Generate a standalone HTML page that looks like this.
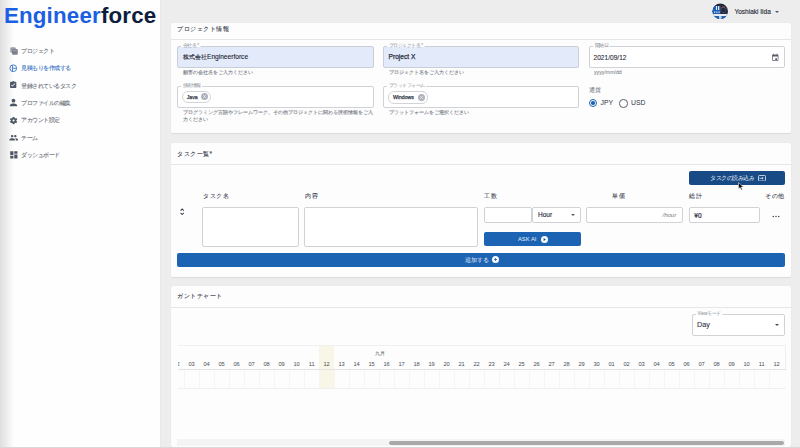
<!DOCTYPE html>
<html><head><meta charset="utf-8">
<style>
*{box-sizing:border-box;margin:0;padding:0}
html,body{width:800px;height:448px;overflow:hidden}
body{background:#ededed;font-family:"Liberation Sans",sans-serif;color:#2d3445;position:relative}
.abs{position:absolute}
#side{position:absolute;left:0;top:0;width:161px;height:448px;background:#fefefe;border-right:1px solid #e8e8e8}
#side .shadow{position:absolute;left:0;top:0;width:14px;height:448px;background:linear-gradient(to right,#dedede,rgba(254,254,254,0))}
.logo{position:absolute;left:3.9px;top:2.8px;font-size:22.3px;font-weight:bold;letter-spacing:0.2px;white-space:nowrap}
.logo .e{color:#1b5fe3}.logo .f{color:#0d1d3b}
.mi{position:absolute;left:20.8px;font-size:11.3px;color:#6e737c;-webkit-text-stroke:0.2px #6e737c;white-space:nowrap;line-height:14px;transform:scale(.5);transform-origin:0 0}
.mi.act{color:#3a78c4;-webkit-text-stroke-color:#3a78c4}
.ic{position:absolute;left:10px}
.card{position:absolute;left:171px;width:620px;background:#fdfdfd;border-radius:2px;box-shadow:0 0.5px 1px rgba(0,0,0,0.08)}
.ch{position:absolute;left:5.5px;font-size:12.9px;color:#3c4250;-webkit-text-stroke:0.2px #3c4250;white-space:nowrap;transform:scale(.5);transform-origin:0 0}
.dv{position:absolute;left:0;right:0;height:1px;background:#e6e6e6}
.fld{position:absolute;border:1px solid #d0d2d6;border-radius:2px;background:#fff}
.fld.fill{background:#e3ebfa;border-color:#c9cfd9}
.lbl{position:absolute;font-size:9.2px;color:#858a93;background:linear-gradient(#fdfdfd 0,#fdfdfd 7.2px,transparent 7.2px);padding:0 3px;white-space:nowrap;line-height:10px;transform:scale(.5);transform-origin:0 0}
.val{position:absolute;font-size:6.6px;color:#1f2533;-webkit-text-stroke:0.08px #1f2533;white-space:nowrap}
.help{position:absolute;font-size:10px;color:#7c818a;-webkit-text-stroke:0.24px #7c818a;white-space:nowrap;line-height:15px;transform:scale(.5);transform-origin:0 0}
.chip{position:absolute;height:12.5px;border:1px solid #d2d4d8;border-radius:6px;background:#fff}
.chip span{position:absolute;left:4px;top:2.3px;font-size:5.2px;color:#353c4b;-webkit-text-stroke:0.25px #353c4b}
.x{position:absolute;width:7px;height:7px}
.tl{position:absolute;font-size:12.6px;color:#3f4553;-webkit-text-stroke:0.16px #3f4553;white-space:nowrap;transform:scale(.5);transform-origin:0 0}
.gd{position:absolute;top:15px;width:15px;text-align:center;font-size:5.7px;color:#484d56;line-height:6px}
.gl{position:absolute;top:24.3px;width:1px;height:18px;background:#f5f5f5}
.btn{position:absolute;background:#1c64b3;border-radius:2px;color:#fff;white-space:nowrap}
</style></head><body>

<div id="side">
  <div class="shadow"></div>
  <div class="logo"><span class="e">Engineer</span><span class="f">force</span></div>

  <svg class="ic" style="top:46.8px;left:9.5px" width="8" height="8" viewBox="0 0 16 16"><rect x="0.5" y="0.5" width="11" height="11" rx="2.5" fill="#9a9fa8"/><rect x="4" y="4" width="11.5" height="11.5" rx="2.5" fill="#7d828c"/><rect x="5.5" y="6" width="8" height="1.5" fill="#a5aab2"/></svg>
  <div class="mi" style="top:46.6px">プロジェクト</div>
  <svg class="ic" style="top:64px;left:9.3px" width="8.5" height="8.5" viewBox="0 0 24 24"><circle cx="12" cy="12" r="9.5" fill="none" stroke="#3a78c4" stroke-width="2.6"/><path d="M10 3v18M10 12h11" stroke="#3a78c4" stroke-width="2.6" fill="none"/></svg>
  <div class="mi act" style="top:64.1px">見積もりを作成する</div>
  <svg class="ic" style="top:79.5px;left:9.3px" width="8.4" height="9.6" viewBox="0 0 24 24"><path fill="#4f5766" d="M19 3h-4.18C14.4 1.84 13.3 1 12 1c-1.3 0-2.4.84-2.82 2H5c-1.1 0-2 .9-2 2v14c0 1.1.9 2 2 2h14c1.1 0 2-.9 2-2V5c0-1.1-.9-2-2-2zm-9 14l-4-4 1.41-1.41L10 14.17l6.59-6.59L18 9l-8 8z"/></svg>
  <div class="mi" style="top:81.6px">登録されているタスク</div>
  <svg class="ic" style="top:97.45px;left:8.15px" width="11" height="11" viewBox="0 0 24 24"><path fill="#4f5766" d="M12 12c2.21 0 4-1.79 4-4s-1.79-4-4-4-4 1.79-4 4 1.79 4 4 4zm0 2c-2.67 0-8 1.34-8 4v2h16v-2c0-2.66-5.33-4-8-4z"/></svg>
  <div class="mi" style="top:98.6px">プロファイルの編集</div>
  <svg class="ic" style="top:115.75px;left:9.05px" width="9.2" height="9.2" viewBox="0 0 24 24"><path fill="#4f5766" d="M19.14 12.94c.04-.3.06-.61.06-.94 0-.32-.02-.64-.07-.94l2.03-1.58c.18-.14.23-.41.12-.61l-1.920-3.32c-.12-.22-.37-.29-.59-.22l-2.39.96c-.5-.38-1.03-.7-1.62-.94l-.36-2.54c-.04-.24-.24-.41-.48-.41h-3.84c-.24 0-.43.17-.47.41l-.36 2.54c-.59.24-1.13.57-1.62.94l-2.39-.96c-.22-.08-.47 0-.59.22L2.74 8.87c-.12.21-.08.47.12.61l2.03 1.58c-.05.3-.09.63-.09.94s.02.64.07.94l-2.03 1.58c-.18.14-.23.41-.12.61l1.92 3.32c.12.22.37.29.59.22l2.39-.96c.5.38 1.030.7 1.62.94l.36 2.54c.05.24.24.41.48.41h3.84c.24 0 .44-.17.47-.41l.36-2.54c.59-.24 1.13-.56 1.62-.94l2.39.96c.22.08.47 0 .59-.22l1.92-3.32c.12-.22.07-.47-.12-.61l-2.01-1.58zM12 14.6c-1.43 0-2.6-1.17-2.6-2.6s1.17-2.6 2.6-2.6 2.6 1.17 2.6 2.6-1.17 2.6-2.6 2.6z"/></svg>
  <div class="mi" style="top:116.1px">アカウント設定</div>
  <svg class="ic" style="top:132.5px;left:8.9px" width="9.5" height="9.5" viewBox="0 0 24 24"><path fill="#4f5766" d="M16 11c1.66 0 2.99-1.34 2.99-3S17.66 5 16 5c-1.660 0-3 1.34-3 3s1.34 3 3 3zm-8 0c1.66 0 2.99-1.34 2.99-3S9.66 5 8 5C6.34 5 5 6.34 5 8s1.34 3 3 3zm0 2c-2.33 0-7 1.17-7 3.5V19h14v-2.5c0-2.33-4.67-3.5-7-3.5zm8 0c-.29 0-.62.02-.97.05 1.16.84 1.97 1.97 1.97 3.45V19h6v-2.5c0-2.33-4.67-3.5-7-3.5z"/></svg>
  <div class="mi" style="top:133.6px">チーム</div>
  <svg class="ic" style="top:149.95px;left:8.8px" width="9.7" height="9.7" viewBox="0 0 24 24"><path fill="#4f5766" d="M3 13h8V3H3v10zm0 8h8v-6H3v6zm10 0h8V11h-8v10zm0-18v6h8V3h-8z"/></svg>
  <div class="mi" style="top:150.6px">ダッシュボード</div>
</div>


<!-- header user -->
<svg class="abs" style="left:711.5px;top:3.2px" width="16.5" height="16.5" viewBox="0 0 33 33">
  <defs><clipPath id="av"><circle cx="16.5" cy="16.5" r="15.5"/></clipPath></defs>
  <circle cx="16.5" cy="16.5" r="16.3" fill="#f6f7f9"/>
  <g clip-path="url(#av)">
    <rect x="0" y="0" width="33" height="33" fill="#222836"/>
    <rect x="0" y="6" width="17" height="16" fill="#1e5eb4"/>
    <rect x="8" y="6" width="2" height="8" fill="#e6eef8"/>
    <rect x="12" y="6" width="2.5" height="8" fill="#d8e4f4"/>
    <rect x="4" y="17" width="2.5" height="2.5" fill="#e6eef8"/>
    <rect x="8.5" y="17" width="2.5" height="2.5" fill="#e6eef8"/>
    <rect x="13" y="17" width="2.5" height="2.5" fill="#e6eef8"/>
    <circle cx="23" cy="14" r="5.5" fill="none" stroke="#4a4f66" stroke-width="1.5"/>
    <path d="M19 9.5a6 6 0 0 1 7 -1" stroke="#d9582e" stroke-width="1.6" fill="none"/>
    <circle cx="24" cy="18.5" r="1.1" fill="#8a3fbf"/>
    <circle cx="26" cy="11" r="0.9" fill="#8a3fbf"/>
    <rect x="0" y="22" width="33" height="4" fill="#e9edf3"/>
    <rect x="0" y="26" width="33" height="7" fill="#1f62c2"/>
    <rect x="14" y="26" width="5" height="7" fill="#c9cfd8"/>
  </g>
</svg>
<div class="abs" style="left:734.5px;top:8px;font-size:6.5px;color:#2a303c;-webkit-text-stroke:0.15px #2a303c;white-space:nowrap">Yoshiaki Iida</div>
<div class="abs" style="left:775.3px;top:10.5px;width:0;height:0;border-left:2.2px solid transparent;border-right:2.2px solid transparent;border-top:2.4px solid #555b66"></div>

<!-- card 1 -->
<div class="card" style="top:23px;height:110px">
  <div class="ch" style="top:1.5px">プロジェクト情報</div>
  <div class="dv" style="top:16px"></div>

  <div class="fld fill" style="left:6px;top:23px;width:197px;height:22px"></div>
  <div class="lbl" style="left:10px;top:20px">会社名 *</div>
  <div class="val" style="left:11.8px;top:29.9px;font-size:12px;transform:scale(.5);transform-origin:0 0;-webkit-text-stroke:0.22px #1f2533">株式会社<span style="font-size:13.2px">Engineerforce</span></div>
  <div class="help" style="left:11.5px;top:45.4px">顧客の会社名をご入力ください</div>

  <div class="fld fill" style="left:212px;top:23px;width:196px;height:22px"></div>
  <div class="lbl" style="left:216px;top:20px">プロジェクト名 *</div>
  <div class="val" style="left:217.6px;top:30.4px;color:#2a3040;font-size:6.6px;-webkit-text-stroke:0.25px #2a3040">Project X</div>
  <div class="help" style="left:217.5px;top:45.4px">プロジェクト名をご入力ください</div>

  <div class="fld" style="left:418px;top:23px;width:196px;height:22px"></div>
  <div class="lbl" style="left:422px;top:20px">開始日</div>
  <div class="val" style="left:422.5px;top:30.7px">2021/09/12</div>
  <div class="help" style="left:423px;top:45.4px;font-size:10.4px;-webkit-text-stroke:0.1px #7c818a">yyyy/mm/dd</div>
  <svg class="abs" style="left:599.5px;top:29.5px" width="8.5" height="8.5" viewBox="0 0 24 24"><path fill="#5a5f69" d="M19 4h-1V2h-2v2H8V2H6v2H5c-1.11 0-1.99.9-1.99 2L3 20a2 2 0 0 0 2 2h14c1.1 0 2-.9 2-2V6c0-1.1-.9-2-2-2zm0 16H5V10h14v10zm-7-5h5v5h-5z"/></svg>

  <div class="fld" style="left:6px;top:63px;width:197px;height:22px"></div>
  <div class="lbl" style="left:10px;top:60px">技術情報</div>
  <div class="chip" style="left:10.75px;top:67.75px;width:29.5px"><span>Java</span></div>
  <svg class="x" style="left:30.25px;top:70.25px" viewBox="0 0 14 14"><circle cx="7" cy="7" r="7" fill="#aeb2ba"/><path d="M4.3 4.3l5.4 5.4M9.7 4.3l-5.4 5.4" stroke="#eef0f3" stroke-width="1.5"/></svg>
  <div class="help" style="left:11.5px;top:84.9px">プログラミング言語やフレームワーク、その他プロジェクトに関わる技術情報をご入</div>
  <div class="help" style="left:11.5px;top:92.4px">力ください</div>

  <div class="fld" style="left:212px;top:63px;width:196px;height:22px"></div>
  <div class="lbl" style="left:216px;top:60px">プラットフォーム</div>
  <div class="chip" style="left:216.9px;top:68.1px;width:39.7px"><span>Windows</span></div>
  <svg class="x" style="left:246.9px;top:70.6px" viewBox="0 0 14 14"><circle cx="7" cy="7" r="7" fill="#aeb2ba"/><path d="M4.3 4.3l5.4 5.4M9.7 4.3l-5.4 5.4" stroke="#eef0f3" stroke-width="1.5"/></svg>
  <div class="help" style="left:217.5px;top:84.9px">プラットフォームをご選択ください</div>

  <div class="abs" style="left:418px;top:63.2px;font-size:12px;color:#6d727c;transform:scale(.5);transform-origin:0 0">通貨</div>
  <div class="abs" style="left:418px;top:76px;width:8px;height:8px;border-radius:50%;border:1px solid #1c64b3"></div>
  <div class="abs" style="left:420.2px;top:78.2px;width:3.6px;height:3.6px;border-radius:50%;background:#1c64b3"></div>
  <div class="abs" style="left:429.5px;top:76px;font-size:6.8px;color:#2d3445">JPY</div>
  <div class="abs" style="left:448px;top:76px;width:8.5px;height:8.5px;border-radius:50%;border:1px solid #5b606b"></div>
  <div class="abs" style="left:460.1px;top:76px;font-size:6.8px;color:#2d3445">USD</div>
</div>

<!-- card 2 -->
<div class="card" style="top:143px;height:134px">
  <div class="ch" style="top:6.5px">タスク一覧*</div>
  <div class="dv" style="top:21px"></div>

  <div class="btn" style="left:518px;top:28px;width:96px;height:14px;background:#184b86"></div>
  <div class="abs" style="left:538.5px;top:31.9px;font-size:11.3px;color:#e9eef6;white-space:nowrap;line-height:12px;transform:scale(.5);transform-origin:0 0">タスクの読み込み</div>
  <svg class="abs" style="left:587px;top:31.6px" width="8" height="6.5" viewBox="0 0 16 13"><rect x="1" y="1" width="14" height="11" rx="1.5" fill="none" stroke="#e6edf6" stroke-width="1.6"/><path d="M3 6.5h7M8 4.2l2.5 2.3L8 8.8" fill="none" stroke="#e6edf6" stroke-width="1.5"/></svg>

  <div class="tl" style="left:32px;top:48.5px">タスク名</div>
  <div class="tl" style="left:134px;top:48.5px">内容</div>
  <div class="tl" style="left:312.5px;top:48.5px">工数</div>
  <div class="tl" style="left:441px;top:48.5px">単価</div>
  <div class="tl" style="left:518px;top:48.5px">総計</div>
  <div class="tl" style="left:594px;top:48.5px">その他</div>

  <div class="fld" style="left:31px;top:64px;width:97px;height:40px"></div>
  <div class="fld" style="left:133px;top:64px;width:173.5px;height:40px"></div>
  <div class="fld" style="left:312.5px;top:64px;width:48.5px;height:16px"></div>
  <div class="fld" style="left:360.5px;top:64px;width:49px;height:16px"></div>
  <div class="val" style="left:367px;top:67.8px;font-size:6.5px;-webkit-text-stroke:0.12px #1f2533">Hour</div>
  <div class="abs" style="left:400px;top:71px;width:0;height:0;border-left:2.2px solid transparent;border-right:2.2px solid transparent;border-top:2.4px solid #555b66"></div>
  <div class="fld" style="left:415px;top:64px;width:96.5px;height:16px"></div>
  <div class="abs" style="left:491.5px;top:69px;font-size:6px;color:#6f747d;font-style:italic">/hour</div>
  <div class="fld" style="left:518px;top:64px;width:70.5px;height:16px"></div>
  <div class="val" style="left:523.3px;top:68.9px;font-size:6.5px;-webkit-text-stroke:0.2px #1f2533">¥0</div>
  <svg class="abs" style="left:600.5px;top:72px" width="8" height="3" viewBox="0 0 16 6"><circle cx="2.5" cy="3" r="1.5" fill="#3f4553"/><circle cx="8" cy="3" r="1.5" fill="#3f4553"/><circle cx="13.5" cy="3" r="1.5" fill="#3f4553"/></svg>

  <div class="btn" style="left:312.5px;top:89px;width:97.5px;height:14px"></div>
  <div class="abs" style="left:347px;top:92.5px;font-size:5.8px;color:#e6edf7;white-space:nowrap">ASK AI</div>
  <svg class="abs" style="left:369.6px;top:92.75px" width="7" height="7" viewBox="0 0 14 14"><circle cx="7" cy="7" r="7" fill="#f7f9fc"/><path d="M5.2 4v6l4.6-3z" fill="#1c4f8f"/></svg>

  <div class="btn" style="left:6px;top:110px;width:608px;height:14px"></div>
  <div class="abs" style="left:294px;top:112.7px;font-size:5.8px;color:#e6edf7;white-space:nowrap">追加する</div>
  <svg class="abs" style="left:320.5px;top:113.3px" width="7" height="7" viewBox="0 0 14 14"><circle cx="7" cy="7" r="7" fill="#f7f9fc"/><path d="M7 4v6M4 7h6" stroke="#1c64b3" stroke-width="1.6"/></svg>

  <svg class="abs" style="left:9.2px;top:64.6px" width="4.4" height="7.6" viewBox="0 0 9 15.2"><path d="M1.2 5.2L4.5 2 7.8 5.2M1.2 10l3.3 3.2L7.8 10" fill="none" stroke="#3a404c" stroke-width="2.1"/></svg>
</div>

<!-- card 3 -->
<div class="card" style="top:286px;height:161px">
  <div class="ch" style="top:6.2px">ガントチャート</div>
  <div class="dv" style="top:21px"></div>

  <div class="fld" style="left:521px;top:28px;width:93px;height:21.5px"></div>
  <div class="lbl" style="left:525px;top:24.5px">Viewモード</div>
  <div class="val" style="left:526px;top:34px;font-size:7.3px;color:#2d3445">Day</div>
  <div class="abs" style="left:604px;top:38px;width:0;height:0;border-left:2.2px solid transparent;border-right:2.2px solid transparent;border-top:2.4px solid #444a55"></div>
  <div class="abs" style="left:613.5px;top:59px;width:1px;height:24px;background:#f0f0f0"></div>

  <div id="gantt" class="abs" style="left:6.5px;top:59px;width:608px;height:44px;overflow:hidden;border-top:1px solid #f1f1f1;"><div class="abs" style="left:141.6px;top:0;width:15px;height:44px;background:#f8f6e6"></div><div class="abs" style="left:0;top:23.3px;width:608.5px;height:1px;background:#e3e3e3"></div><div class="abs" style="left:0;top:42.3px;width:608.5px;height:1px;background:#f0f0f0"></div><div class="gd" style="left:-8.4px">02</div><div class="gd" style="left:6.6px">03</div><div class="gl" style="left:6.6px"></div><div class="gd" style="left:21.6px">04</div><div class="gl" style="left:21.6px"></div><div class="gd" style="left:36.6px">05</div><div class="gl" style="left:36.6px"></div><div class="gd" style="left:51.6px">06</div><div class="gl" style="left:51.6px"></div><div class="gd" style="left:66.6px">07</div><div class="gl" style="left:66.6px"></div><div class="gd" style="left:81.6px">08</div><div class="gl" style="left:81.6px"></div><div class="gd" style="left:96.6px">09</div><div class="gl" style="left:96.6px"></div><div class="gd" style="left:111.6px">10</div><div class="gl" style="left:111.6px"></div><div class="gd" style="left:126.6px">11</div><div class="gl" style="left:126.6px"></div><div class="gd" style="left:141.6px">12</div><div class="gl" style="left:141.6px"></div><div class="gd" style="left:156.6px">13</div><div class="gl" style="left:156.6px"></div><div class="gd" style="left:171.6px">14</div><div class="gl" style="left:171.6px"></div><div class="gd" style="left:186.6px">15</div><div class="gl" style="left:186.6px"></div><div class="gd" style="left:201.6px">16</div><div class="gl" style="left:201.6px"></div><div class="gd" style="left:216.6px">17</div><div class="gl" style="left:216.6px"></div><div class="gd" style="left:231.6px">18</div><div class="gl" style="left:231.6px"></div><div class="gd" style="left:246.6px">19</div><div class="gl" style="left:246.6px"></div><div class="gd" style="left:261.6px">20</div><div class="gl" style="left:261.6px"></div><div class="gd" style="left:276.6px">21</div><div class="gl" style="left:276.6px"></div><div class="gd" style="left:291.6px">22</div><div class="gl" style="left:291.6px"></div><div class="gd" style="left:306.6px">23</div><div class="gl" style="left:306.6px"></div><div class="gd" style="left:321.6px">24</div><div class="gl" style="left:321.6px"></div><div class="gd" style="left:336.6px">25</div><div class="gl" style="left:336.6px"></div><div class="gd" style="left:351.6px">26</div><div class="gl" style="left:351.6px"></div><div class="gd" style="left:366.6px">27</div><div class="gl" style="left:366.6px"></div><div class="gd" style="left:381.6px">28</div><div class="gl" style="left:381.6px"></div><div class="gd" style="left:396.6px">29</div><div class="gl" style="left:396.6px"></div><div class="gd" style="left:411.6px">30</div><div class="gl" style="left:411.6px"></div><div class="gd" style="left:426.6px">01</div><div class="gl" style="left:426.6px"></div><div class="gd" style="left:441.6px">02</div><div class="gl" style="left:441.6px"></div><div class="gd" style="left:456.6px">03</div><div class="gl" style="left:456.6px"></div><div class="gd" style="left:471.6px">04</div><div class="gl" style="left:471.6px"></div><div class="gd" style="left:486.6px">05</div><div class="gl" style="left:486.6px"></div><div class="gd" style="left:501.6px">06</div><div class="gl" style="left:501.6px"></div><div class="gd" style="left:516.6px">07</div><div class="gl" style="left:516.6px"></div><div class="gd" style="left:531.6px">08</div><div class="gl" style="left:531.6px"></div><div class="gd" style="left:546.6px">09</div><div class="gl" style="left:546.6px"></div><div class="gd" style="left:561.6px">10</div><div class="gl" style="left:561.6px"></div><div class="gd" style="left:576.6px">11</div><div class="gl" style="left:576.6px"></div><div class="gd" style="left:591.6px">12</div><div class="gl" style="left:591.6px"></div><div class="abs" style="left:197.2px;top:4.4px;font-size:10px;color:#4a4f58;transform:scale(.5);transform-origin:0 0">九月</div></div>

  <div class="abs" style="left:6px;top:153px;width:608px;height:7px;background:#f4f4f4"></div>
  <div class="abs" style="left:218px;top:155px;width:394.5px;height:4px;border-radius:2px;background:#a9a9a9"></div>
</div>
<svg class="abs" style="left:737.8px;top:181.8px" width="6" height="9" viewBox="0 0 12 18"><path d="M1 1v13l3.2-3 2.3 5.2 2.2-1-2.3-5H11z" fill="#111" stroke="#fff" stroke-width="1"/></svg>
<div class="abs" style="left:0;top:447px;width:800px;height:1px;background:#d9d9d9"></div>
</body></html>
